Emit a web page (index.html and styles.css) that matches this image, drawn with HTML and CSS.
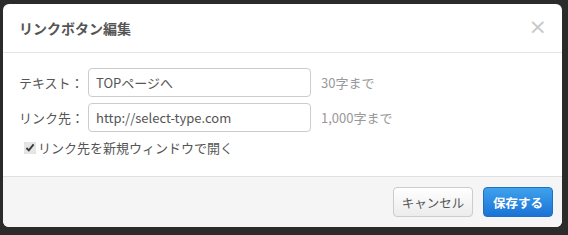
FILE: index.html
```html
<!DOCTYPE html>
<html lang="ja">
<head>
    <meta charset="UTF-8">
    <title>リンクボタン編集</title>
    <link rel="stylesheet" href="styles.css">
</head>
<body>
    <div class="modal">
        <div class="modal-header">
            <h3>リンクボタン編集</h3>
            <span class="close">&times;</span>
        </div>

        <div class="modal-body">
            <div class="field">
                <label class="field-label">テキスト：</label>
                <input class="field-input" type="text" value="TOPページへ">
                <span class="hint">30字まで</span>
            </div>
            <div class="field">
                <label class="field-label">リンク先：</label>
                <input class="field-input" type="text" value="http://select-type.com">
                <span class="hint">1,000字まで</span>
            </div>
            <label class="check">
                <input type="checkbox" checked>
                リンク先を新規ウィンドウで開く
            </label>
        </div>

        <div class="modal-footer">
            <button class="btn">キャンセル</button>
            <button class="btn btn-primary">保存する</button>
        </div>
    </div>
</body>
</html>
```

FILE: styles.css
```css
* {
    margin: 0;
    padding: 0;
    box-sizing: border-box;
}

body {
    background: #2b2b2b;
    font-family: "Noto Sans CJK JP", "Noto Sans", sans-serif;
    font-size: 13px;
    color: #555;
}

.modal {
    margin: 4px 0 0 3px;
    width: 559px;
    height: 223px;
    background: #fff;
    border-radius: 6px;
    overflow: hidden;
    display: flex;
    flex-direction: column;
}

.modal-header {
    height: 49px;
    border-bottom: 1px solid #e5e5e5;
    display: flex;
    align-items: center;
    justify-content: space-between;
    padding: 0 15px 0 16px;
}

.modal-header h3 {
    font-size: 14px;
    font-weight: bold;
    color: #555;
}

.close {
    font-size: 22px;
    line-height: 1;
    color: #c8c8c8;
    font-family: "DejaVu Sans", sans-serif;
    margin-top: -3px;
}

.modal-body {
    flex: 1;
    padding: 15px 16px 0 16px;
}

.field {
    display: flex;
    align-items: center;
    margin-bottom: 6px;
}

.field-label {
    width: 69px;
}

.field-input {
    width: 223px;
    height: 29px;
    border: 1px solid #ccc;
    border-radius: 4px;
    padding: 0 7px;
    font-family: inherit;
    font-size: 13px;
    color: #555;
}

.hint {
    margin-left: 10px;
    color: #999;
}

.check {
    display: flex;
    align-items: center;
    gap: 2px;
    margin-top: 4px;
    padding-left: 5px;
}

.check input {
    width: 12px;
    height: 12px;
    margin: 0;
    accent-color: #e6e6e6;
}

.modal-footer {
    height: 51px;
    border-top: 1px solid #e0e0e0;
    background: #f5f5f5;
    display: flex;
    justify-content: flex-end;
    align-items: flex-start;
    gap: 10px;
    padding: 10px 9px 0 0;
}

.btn {
    height: 30px;
    width: 80px;
    border: 1px solid #ccc;
    border-radius: 4px;
    background: linear-gradient(#fff, #ececec);
    font-family: inherit;
    font-size: 12.5px;
    color: #555;
}

.btn-primary {
    width: 70px;
    border-color: #1f6fc5;
    background: linear-gradient(#3ea2ec, #1b72d6);
    color: #fff;
    font-weight: bold;
}
```
